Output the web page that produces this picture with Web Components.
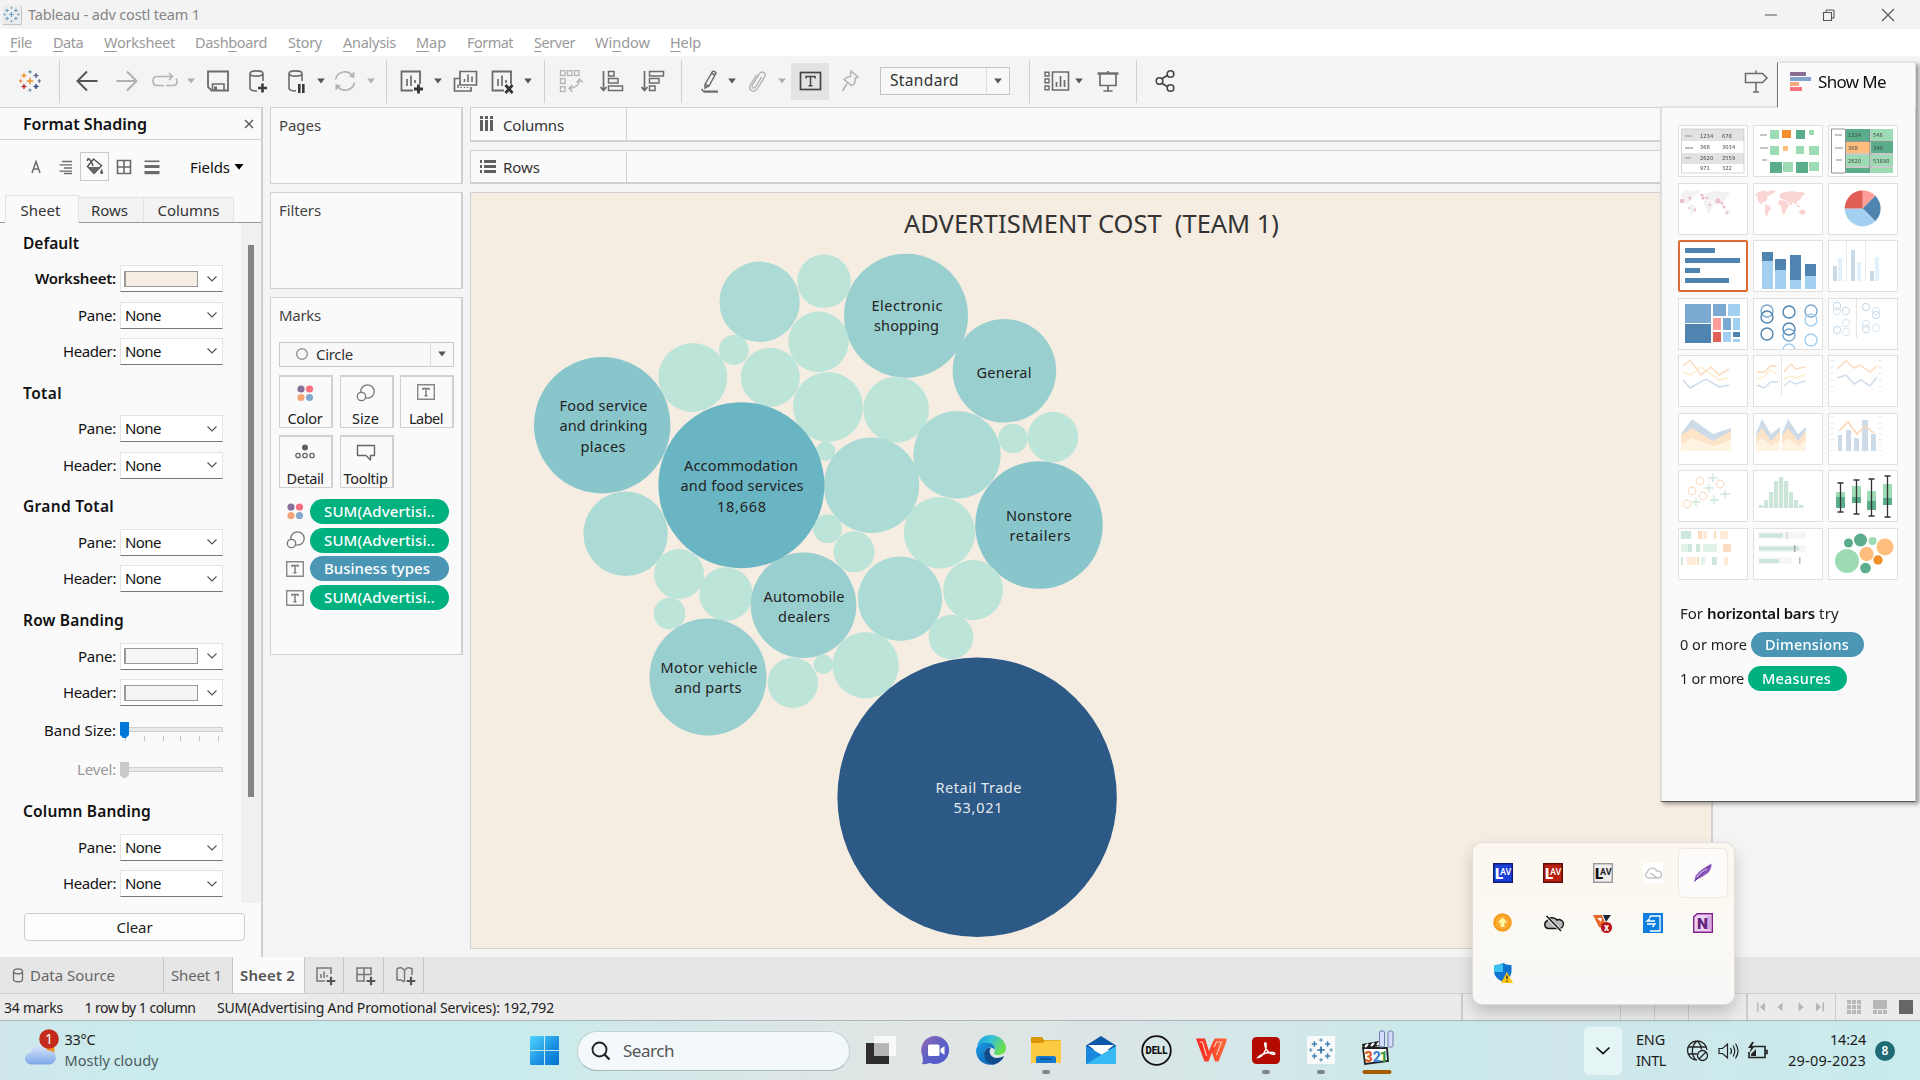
<!DOCTYPE html>
<html lang="en">
<head>
<meta charset="utf-8">
<title>Tableau - adv costl team 1</title>
<style>
html,body{margin:0;padding:0;width:1920px;height:1080px;overflow:hidden;background:#f4f4f4}
</style>
</head>
<body>
<tableau-desktop></tableau-desktop>
<script>
const BOOK = '"Noto Sans",sans-serif';
const SEGOE = '"Noto Sans","Open Sans",sans-serif';
const plus = (x, y, r, c, w) => `<path d="M${x - r} ${y}H${x + r}M${x} ${y - r}V${y + r}" stroke="${c}" stroke-width="${w}" fill="none"/>`;
const rects = (c, list) => list.map(r => `<rect x="${r[0]}" y="${r[1]}" width="${r[2]}" height="${r[3]}" fill="${r[4] || c}"/>`).join('');
const circs = (list, attrs = '') => list.map(r => `<circle cx="${r[0]}" cy="${r[1]}" r="${r[2]}" ${attrs || `fill="${r[3]}"`}/>`).join('');
const line = (d, c, w = 1.5, extra = '') => `<path d="${d}" fill="none" stroke="${c}" stroke-width="${w}" ${extra}/>`;
const burst = (k, cols) => plus(k, k, k * .3, cols[0], k * .14) +
  plus(k * .45, k * .5, k * .22, cols[1], k * .12) + plus(k * 1.55, k * .5, k * .22, cols[2], k * .12) +
  plus(k * .45, k * 1.5, k * .22, cols[3], k * .12) + plus(k * 1.55, k * 1.5, k * .22, cols[4], k * .12) +
  plus(k, k * .17, k * .15, cols[5], k * .1) + plus(k, k * 1.83, k * .15, cols[6], k * .1) +
  plus(k * .15, k, k * .15, cols[7], k * .1) + plus(k * 1.85, k, k * .15, cols[8], k * .1);
const blues = ['#2e6f9e', '#4284ad', '#4284ad', '#4284ad', '#4284ad', '#5f97ba', '#5f97ba', '#5f97ba', '#5f97ba'];
const pale = blues.map(() => '#5f9fc4');
const G = '#6b6b6b', L = '#b3b3b3';
const db = c => line('M7 6.5C7 3 20 3 20 6.5C20 10 7 10 7 6.5V21C7 23.5 12 24 14 24M20 6.5V14', c, 1.6);
const sheet = line('M16 23.5H4.5V4.5H23V17', G, 1.8) + line('M10 12V19M14 8.5V19M18 13V16', G, 1.7);

const ICONS = {
  applogo: [20, 20, `<rect x=".5" y=".5" width="19" height="19" fill="#ececec"/><path d="M19.5 1V19.5H1" fill="none" stroke="#c4c4c4"/><g transform="translate(1.5 1.5)">${burst(8, pale)}</g>`],
  logo: [22, 22, burst(11, ['#eb912c', '#eb912c', '#5c6692', '#c72035', '#1f447e', '#59879b', '#7199a6', '#e8762d', '#5c6692'])],
  back: [28, 28, line('M24.5 14H5M14 4.5L4.5 14L14 23.5', '#555', 2)],
  fwd: [28, 28, line('M3.500 14H23M14 4.500L23.500 14L14 23.500', '#b0b0b0', 2)],
  redo: [28, 28, line('M13 18.500H6Q2 18.500 2 14Q2 9.500 6 9.500H21M15 18.500H22Q26 18.500 26 14.500Q26 12.500 25 11.500M18 6L21.500 9.500L18 13', L, 1.6)],
  save: [28, 28, line('M4 4.500H24V23.500H7.500L4 20Z', G, 1.8) + line('M8.500 23V17H20V23', G, 1.6) + rects(G, [[10, 19.500, 3, 4]])],
  dbplus: [28, 28, db(G) + plus(19.500, 21, 4.500, '#3b3b3b', 2.600)],
  dbpause: [28, 28, db(G) + rects('#3b3b3b', [[16, 17, 2.600, 9], [20, 17, 2.600, 9]])],
  refresh: [28, 28, line('M4.500 12.500A9.500 9.500 0 0 1 22 9.500M23.500 15.500A9.500 9.500 0 0 1 6 18.500', L, 1.7) + '<path d="M23.500 4.500V11L18 9.500ZM4.500 23.500V17L10 18.500Z" fill="#b3b3b3"/>'],
  sheetplus: [28, 28, sheet + plus(21.500, 22, 4.500, '#333', 2.800)],
  sheetx: [28, 28, sheet + line('M17.500 18L24.500 26M24.500 18L17.500 26', '#333', 2.900)],
  dup: [28, 28, line('M9 4.500H25.500V18H9ZM8 11.500H3.500V24H20V20', G, 1.7) + line('M13.500 12V15M17 7.500V15M21 9.500V15', G, 1.600) + line('M7 21V17.500M10 21V20M13.500 21V20M16.500 21V20', G, 1.500)],
  swap: [28, 28, [[4, 4], [11, 4], [18, 4], [4, 12], [4, 20]].map(p => `<rect x="${p[0] - .5}" y="${p[1] - .3}" width="4.500" height="4.800" fill="none" stroke="#b3b3b3" stroke-width="1.300"/>`).join('') + line('M22.500 13Q22 20 13 21.500M15.500 18L12 21.500L15.500 25M19.500 15.500L22.700 12L25.500 15.500', L, 1.400)],
  asc: [28, 28, line('M5.500 4V23M2.500 20L5.500 23.500L8.500 20', G, 1.700) + line('M10.500 4.500H16V9H10.500ZM10.500 11.500H20V16H10.500ZM10.500 19H24.500V23.500H10.500Z', G, 1.500)],
  desc: [28, 28, line('M5.500 4V23M2.500 20L5.500 23.500L8.500 20', G, 1.700) + line('M10.500 4.500H24.500V9H10.500ZM10.500 11.500H20V16H10.500ZM10.500 19H16V23.500H10.500Z', G, 1.500)],
  pen: [28, 28, line('M8 17.500L15.500 4.500Q17.500 3.500 19 6L12 19L8 21ZM8 17.500L12 19M15 6.500L18 8', G, 1.500) + rects(G, [[7, 23.500, 14, 2.200]]) + line('M4.500 22L7 25', G, 1.500)],
  clip: [28, 28, line('M17.500 10L11.500 20Q10 22 8.500 20.500Q7.500 19.500 8.500 17.500L15.500 6.500Q17.500 4 20 5.500Q22 7 20.500 10L13.500 21.500Q11 25.500 7.500 23.500Q4.500 21.500 6.500 17.500L12.500 8', L, 1.400)],
  tbox: [38, 37, `<rect width="38" height="37" fill="#e3e3e3"/><rect x="9.500" y="9.500" width="20" height="17" fill="none" stroke="#444" stroke-width="1.700"/>` + line('M15 15.500V13.500H24V15.500M19.500 13.500V22.500M17.500 22.800H21.500', '#444', 1.500)],
  pin: [28, 28, line('M15 4L22 10L19.500 11L18.500 16.500L15.500 18.500L8 12.500L11 10.500L14.500 9.500ZM11 16.500L6.500 24', L, 1.500)],
  fit: [28, 28, line('M9.500 5H25.500V23H9.500Z', G, 1.600) + line('M13.500 15V20M17.500 9V20M21.500 13V20', G, 1.700) + line('M2 5.200H6V9H2ZM2 12H6V15.800H2ZM2 19H6V22.800H2Z', G, 1.400)],
  present: [28, 28, line('M3.500 6.500H24.500', G, 2.400) + line('M6 7V18.500H22V7M14 4V6M14 19V24M9.500 24H18.500', G, 1.700)],
  share: [28, 28, line('M9.500 12L16 8M9.500 16L16 20', '#444', 1.600) + circs([[7.500, 14, 3.300], [18.500, 7, 3.300], [18.500, 21, 3.300]], 'fill="none" stroke="#444" stroke-width="1.600"')],
  sign: [28, 28, line('M3.500 6.500H20.500L25 11L20.500 15.500H3.500Z', G, 1.500) + line('M14 3.500V6.500M14 15.500V25M11 25H17', G, 1.500)],
  tri: [10, 6, `<path d="M1.200 .5H8.800L5 5.500Z" fill="#555"/>`],
  trilight: [10, 6, `<path d="M1.200 .5H8.800L5 5.500Z" fill="#b0b0b0"/>`],
  triblack: [10, 6, `<path d="M.5 0H9.500L5 5.800Z" fill="#000"/>`],
  x: [10, 10, line('M1 1L9 9M9 1L1 9', '#555', 1.400)],
  chev: [12, 8, line('M1.500 1.500L6 6L10.500 1.500', '#555', 1.200)],
  fA: [20, 20, line('M6 16L10 4.500L14 16M7.500 12H12.500', G, 1.500)],
  fAlign: [20, 20, line('M6 4.500H16M3.500 7.800H16M8 11H16M3.500 14.200H16M8 16.500H16', G, 1.300)],
  fBucket: [30, 30, `<rect x=".5" y=".5" width="28" height="28" fill="#fafafa" stroke="#c9c9c9"/>` + line('M13.500 7L21.500 13.500L14 21.500L7.500 14.500ZM13 14C10 5 7 6 7.500 9', '#555', 1.500) + '<path d="M8 15H21L14 22Z" fill="#666"/><path d="M21.500 17C23.500 20 23.500 22 21.500 22C19.800 22 19.800 20 21.500 17Z" fill="#555"/>'],
  fGrid: [20, 20, line('M3.500 3.500H16.500V16.500H3.500ZM10 3.500V16.500M3.500 10H16.500', G, 1.600)],
  fLines: [20, 20, rects(G, [[2.500, 3.500, 15, 1.600], [2.500, 8, 15, 3], [2.500, 14, 15, 3.200]])],
  cols: [14, 16, rects('#5f5f5f', [[0, 0, 3, 3], [5, 0, 3, 3], [10, 0, 3, 3], [0, 4, 3, 11], [5, 4, 3, 11], [10, 4, 3, 11]])],
  rows: [16, 14, rects('#5f5f5f', [[0, 0, 2, 3], [0, 5, 2, 3], [0, 10, 2, 3], [4, 0, 12, 3], [4, 5, 12, 3], [4, 10, 12, 3]])],
  ring: [14, 14, circs([[7, 7, 5.300]], 'fill="none" stroke="#999" stroke-width="1.500"')],
  color: [18, 18, circs([[5, 5, 3.600, '#87709a'], [13.500, 5, 3.600, '#fa7080'], [5, 13.500, 3.600, '#f5a678'], [13.500, 13.500, 3.600, '#84a9cf']])],
  size: [20, 18, circs([[11.500, 7.500, 6.700]], 'fill="none" stroke="#777" stroke-width="1.300"') + circs([[5.500, 12.500, 4.200]], 'fill="#fafafa" stroke="#777" stroke-width="1.300"')],
  label: [18, 16, line('M.7 .7H17.300V15.300H.7Z', '#888', 1.400) + line('M6 6V4.500H12V6M9 4.500V11.500M7.500 11.700H10.500', '#777', 1.400)],
  detail: [20, 16, circs([[10, 3.500, 3, '#5f5f5f']]) + circs([[3, 11.500, 2.200], [10, 11.500, 2.200], [17, 11.500, 2.200]], 'fill="none" stroke="#666" stroke-width="1.300"')],
  tooltip: [20, 18, line('M1.500 1.500H18.500V11.500H14.500V16L10 11.500H1.500Z', '#666', 1.400, 'stroke-linejoin="round"')],
  showme: [22, 20, rects('', [[0, 0, 16, 4, '#8a6d92'], [0, 5, 21, 4, '#84a5cb'], [0, 10, 9, 4, '#f5a97f'], [0, 15, 12, 4, '#fb7381']])],
  cyl: [12, 15, line('M1.500 3.500C1.500 0 10.500 0 10.500 3.500V11.500C10.500 14.500 1.500 14.500 1.500 11.500ZM1.500 3.500C1.500 6.500 10.500 6.500 10.500 3.500', G, 1.300)],
  nsheet: [22, 20, line('M10 15H2V2H16V8', '#777', 1.500) + line('M6 8V12M9 5.500V12M12 9V11', '#777', 1.500) + plus(16, 15, 4.300, '#555', 2.200)],
  ndash: [22, 20, line('M10 15H2V2H16V9M9 2V15M2 8.500H16', '#777', 1.500) + plus(16, 15, 4.300, '#555', 2.200)],
  nstory: [22, 20, line('M2 2.500L6 1.500L9.500 4L13 1.500L17 2.500V9M9.500 4V15M2 2.500V14H6L9.500 16', '#777', 1.500) + plus(16, 15, 4.300, '#555', 2.200)],
  nfirst: [10, 10, '<path d="M1 .5H2.500V9.500H1ZM9 .5V9.500L4 5Z" fill="#b5b5b5"/>'],
  nprev: [10, 10, '<path d="M7.500 .5V9.500L2.500 5Z" fill="#b5b5b5"/>'],
  nnext: [10, 10, '<path d="M2.500 .5V9.500L7.500 5Z" fill="#b5b5b5"/>'],
  nlast: [10, 10, '<path d="M7.500 .5H9V9.500H7.500ZM1 .5V9.500L6 5Z" fill="#b5b5b5"/>'],
  vgrid: [14, 14, rects('#b8b8b8', [[0, 0, 4, 4], [5, 0, 4, 4], [10, 0, 4, 4], [0, 5, 4, 4], [5, 5, 4, 4], [10, 5, 4, 4], [0, 10, 4, 4], [5, 10, 4, 4], [10, 10, 4, 4]])],
  vfilm: [14, 14, rects('#b8b8b8', [[0, 0, 14, 9], [0, 10, 4, 4], [5, 10, 4, 4], [10, 10, 4, 4]])],
  vtab: [14, 14, rects('#666', [[0, 0, 14, 14]])],
  min: [12, 12, line('M0 6H12', '#555', 1)],
  restore: [14, 14, line('M1.500 4.500H9.500V12.500H1.500ZM4 4V3Q4 2 5 2H11Q12 2 12 3V9Q12 10 11 10H10', '#555', 1.100)],
  winclose: [14, 14, line('M1 1L13 13M13 1L1 13', '#555', 1.100)],
  // taskbar
  weather: [46, 44, `<defs><linearGradient id="c" x1="0" y1="0" x2="0" y2="1"><stop offset="0" stop-color="#dbe8fb"/><stop offset="1" stop-color="#7ea7ea"/></linearGradient></defs><circle cx="28" cy="21" r="6.500" fill="#f7931e"/><path d="M11 35.500a6 6 0 0 1 0-12 8.500 8.500 0 0 1 16.500-2 7 7 0 0 1 2.500 14Z" fill="url(#c)"/><circle cx="29" cy="10" r="9.800" fill="#c42b1c"/><text x="29" y="15" font-family="Noto Sans" font-size="14" fill="#fff" text-anchor="middle">1</text>`],
  win: [29, 29, `<defs><linearGradient id="w" x1="0" y1="0" x2="1" y2="1"><stop offset="0" stop-color="#4fd4ff"/><stop offset=".6" stop-color="#1a8fe0"/><stop offset="1" stop-color="#0072d0"/></linearGradient></defs><path d="M1 0H14V14H0V1Q0 0 1 0M15 0H28Q29 0 29 1V14H15M0 15H14V29H1Q0 29 0 28M15 15H29V28Q29 29 28 29H15Z" fill="url(#w)"/>`],
  search: [20, 20, circs([[8.500, 8.500, 7]], 'fill="none" stroke="#222" stroke-width="1.900"') + line('M13.500 13.500L18.500 18.500', '#222', 2.300)],
  taskview: [30, 29, `<path d="M0 7H23V28H0Z" fill="#2f2e2c"/><path d="M8 0H30V20H8Z" fill="#fff" opacity=".75"/><path d="M8 7.500H23V20H8Z" fill="#b5b5b5"/>`],
  teams: [30, 29, `<defs><linearGradient id="t" x1="0" y1="0" x2="1" y2="1"><stop offset="0" stop-color="#9a67b2"/><stop offset=".5" stop-color="#5b5fc7"/><stop offset="1" stop-color="#5059c9"/></linearGradient></defs><path d="M15 0A14 14 0 1 1 9 27Q5 28.500 1 28Q2.500 25 1.500 20A14 14 0 0 1 15 0Z" fill="url(#t)"/><rect x="7" y="8.500" width="11.500" height="11.500" rx="1.500" fill="#fff"/><path d="M19.500 13L23.500 10V19L19.500 16Z" fill="#fff"/>`],
  edge: [30, 30, `<defs><linearGradient id="e" x1="0" y1="0" x2="1" y2=".4"><stop offset="0" stop-color="#1b9de2"/><stop offset=".5" stop-color="#35c1d6"/><stop offset="1" stop-color="#6be04e"/></linearGradient><linearGradient id="f" x1="0" y1="0" x2="1" y2="1"><stop offset="0" stop-color="#1a9ee8"/><stop offset="1" stop-color="#0b56a8"/></linearGradient></defs><path d="M1 11C3 3 9 0 15 0C24 0 30 7 30 13C30 18 26 20 22 20C18 20 17 18 19 16C20 12 17 9 13 9C8 8 3 9 1 11Z" fill="url(#e)"/><path d="M0 15C1 9 7 6 13 8C18 9 20 13 18 15C17 11 9 12 8 18C8 24 14 29 20 29C8 32 0 25 0 15Z" fill="url(#f)"/><path d="M8 18C9 13 13 12 15 13C12 16 14 22 20 23C23 23 26 22 28 21C27 25 22 29 17 29.500C11 28 8 24 8 18Z" fill="#114a8b"/>`],
  explorer: [30, 28, `<path d="M1 1Q0 1 0 2V8H30V6Q30 4 28 4H13L11 1Z" fill="#d9960b"/><path d="M0 7H12L14 4.500H28Q30 4.500 30 6V27H0Z" fill="#fccb41"/><path d="M5 27V22Q5 20 7 20H23Q25 20 25 22V27Z" fill="#1479cd"/><path d="M9 23H21" stroke="#0a529a" stroke-width="1.500"/>`],
  mail: [30, 29, `<path d="M0 9.500L15 0L30 9.500V14H0Z" fill="#0d57a8"/><path d="M2 9H28L15 19Z" fill="#fff"/><path d="M0 10L17 19.500L30 28H0Z" fill="#1f97e6"/><path d="M30 10L0 28H30Z" fill="#38b9f3"/><path d="M0 10L15 19L0 28Z" fill="#1b87dc"/>`],
  dell: [31, 31, `<circle cx="15.500" cy="15.500" r="14.300" fill="none" stroke="#111" stroke-width="1.800"/><text x="15.500" y="19.300" font-family="Roboto" font-weight="900" font-size="10" text-anchor="middle" textLength="22" lengthAdjust="spacingAndGlyphs" fill="#111">DELL</text>`],
  wps: [31, 24, `<defs><linearGradient id="p" x1="0" y1="0" x2="1" y2="0"><stop offset="0" stop-color="#f8241d"/><stop offset="1" stop-color="#fb6a3a"/></linearGradient></defs><path d="M0 .5H9L13 13L16.500 4.500L19 .5H30.500V3.500L22.500 23.500H19L16 14.500L12.500 23.500H8.500Z" fill="url(#p)"/><path d="M3.500 4H6.500L10.500 18M20.500 17L25.500 4H20.500L18 9" fill="none" stroke="#ffd0c4" stroke-width="1.100"/>`],
  acrobat: [28, 27, `<rect width="28" height="27" rx="4.500" fill="#b30b00"/>` + line('M6 20.500C10 20 15 14 14 7C14 5 12.500 5.500 12.700 7.500C13 12 17 17 22 17.500C24 17 22 15 19 15.300C14 15.500 8 18 6 20.500Z', '#fff', 1.500)],
  tabtask: [28, 28, `<rect width="28" height="28" fill="#f7f9fa"/><g transform="translate(2 2)">${burst(12, blues)}</g>`],
  mpc: [36, 36, `<path d="M3 12L26 8V13L4 17Z" fill="#222"/><path d="M4 16H28L29 29L6 32Z" fill="#fff" stroke="#222" stroke-width="1.800"/><path d="M6 15L9 12M12 14L15 11M18 13L21 10" stroke="#fff" stroke-width="2.200"/><text x="5.500" y="29.500" font-family="Roboto" font-weight="900" font-size="14"><tspan fill="#e0591c">3</tspan><tspan fill="#3a82d2">2</tspan><tspan fill="#3c9a2f" dx="-1">1</tspan></text><rect x="20.500" y="-1" width="5" height="16" rx="1.500" fill="#d4dcff" stroke="#707ba8"/><rect x="29" y="-1" width="5" height="16" rx="1.500" fill="#d4dcff" stroke="#707ba8"/>`],
  tchev: [16, 10, line('M1.500 1.500L8 7.500L14.500 1.500', '#111', 1.700)],
  globe: [22, 22, line('M10 1A9.500 9.500 0 1 0 10 20M10 1A9.500 9.500 0 0 1 20 10M10 1C4 6 4 15 9 20M10 1C13 3.500 14.500 6.500 14.500 9.500M1.500 7H19M1.500 14H10', '#222', 1.300) + circs([[15.500, 15.500, 5]], 'fill="none" stroke="#222" stroke-width="1.300"') + line('M12 19L19 12', '#222', 1.300)],
  speaker: [22, 18, line('M1 6.500H4.500L9.500 2V16L4.500 11.500H1ZM12.500 6Q14.500 9 12.500 12M15 3.500Q18.500 9 15 14.500M17.500 1.500Q22.500 9 17.500 16.500', '#222', 1.200)],
  battery: [22, 18, line('M7 4.500H18V15.500H2V10M18.500 8.500H20V11.500H18.500', '#222', 1.600) + '<path d="M5 0L1 6H4L2.500 11L8 4H5L7 0ZM4 12L9 7V14H4Z" fill="#222"/>'],
  // tray
  lavb: [20, 20, `<rect x=".7" y=".7" width="18.600" height="18.600" fill="#1c3fd8" stroke="#0b1c74" stroke-width="1.400"/><text x="2" y="15.500" font-family="Roboto" font-weight="900" font-size="15" fill="#fff">L</text><text x="7" y="11.800" font-family="Roboto" font-size="9" font-weight="500" fill="#fff">AV</text>`],
  lavr: [20, 20, `<rect x=".7" y=".7" width="18.600" height="18.600" fill="#b81f0e" stroke="#5c0d06" stroke-width="1.400"/><text x="2" y="15.500" font-family="Roboto" font-weight="900" font-size="15" fill="#fff">L</text><text x="7" y="11.800" font-family="Roboto" font-size="9" font-weight="500" fill="#fff">AV</text>`],
  lavw: [20, 20, `<rect x=".7" y=".7" width="18.600" height="18.600" fill="#eee" stroke="#999" stroke-width="1.400"/><text x="2" y="15.500" font-family="Roboto" font-weight="900" font-size="15" fill="#111">L</text><text x="7" y="11.800" font-family="Roboto" font-size="9" font-weight="700" fill="#222">AV</text>`],
  cc: [20, 20, `<rect width="20" height="20" fill="#fff"/>` + line('M5 15A3.200 3.200 0 0 1 4.500 9A5 5 0 0 1 14 8.200A3.500 3.500 0 1 1 14.500 15ZM7 10.500Q9.500 10.500 11 12.500T14.500 15', '#c4c4c4', 1.400)],
  feather: [20, 20, `<path d="M1 19.500L2.500 13Q6 8 11 5L18.500 .5Q19 5.500 15 10Q9 14.500 3 17Z" fill="#8d58bd"/><path d="M2 18L16.500 3" stroke="#5f2d94" stroke-width="1"/><path d="M4 14Q9 8 14 6" stroke="#cdb4e6" stroke-width="1.200" fill="none"/>`],
  update: [20, 20, `<circle cx="9.500" cy="9.500" r="9.300" fill="#f99a1c"/><circle cx="9.500" cy="9.500" r="7" fill="#fba92f"/><path d="M9.500 4.500L14.500 9.500H11.500V14H7.500V9.500H4.500Z" fill="#fff6a0"/>`],
  cloudoff: [21, 20, `<path d="M5 15.500A4 4 0 0 1 4 8A6 6 0 0 1 14 7A4.500 4.500 0 1 1 15.500 15.500Z" fill="#b9b9b9" stroke="#111" stroke-width="1.400"/><path d="M3 3L18 18" stroke="#fff" stroke-width="3"/><path d="M3.500 3L18 18" stroke="#111" stroke-width="1.500"/>`],
  vlc: [20, 20, `<path d="M0 2H9L12 10L9 15L6 14Z" fill="#e8652a"/><path d="M10 2H18L13 9Z" fill="#1c2536"/><path d="M4 5H9L8 9Z" fill="#fff"/><circle cx="13.500" cy="14.500" r="5.600" fill="#b3151b"/><text x="13.500" y="18" font-family="Roboto" font-weight="700" font-size="10" fill="#fff" text-anchor="middle">x</text>`],
  phone: [20, 20, `<rect width="20" height="20" fill="#0b7ee0"/>` + line('M7 3H17V18H7M7 3V5M12 8H4L7 5.500M4 11H12L9.500 14', '#fff', 1.300)],
  onenote: [20, 20, `<path d="M4 .7H19.300V19.300H.7V4Z" fill="#ecd0f2" stroke="#80218c" stroke-width="1.400"/><rect x="14" y="3" width="4" height="14" fill="#d9a8e4"/><text x="9.500" y="15.500" font-family="Roboto" font-weight="900" font-size="15.500" fill="#63257c" text-anchor="middle">N</text>`],
  defender: [20, 20, `<path d="M10 0Q14 2.500 18.500 2V9Q18 15 10 19Q1.500 15 1 9V2Q6 2.500 10 0Z" fill="#1173d0"/><path d="M10 0V9H1V2Q6 2.500 10 0Z" fill="#3bc0f2"/><path d="M14 9L20 20H8Z" fill="#fdc513"/><path d="M14 12.500V16M14 17.500V18.700" stroke="#222" stroke-width="1.300"/>`],
};

const num = (x, y, t) => `<text x="${x}" y="${y}" font-family="DejaVu Sans" font-size="5.400" textLength="${t.length * 3.300}" lengthAdjust="spacingAndGlyphs" fill="#444">${t}</text>`;
const land = (c) => `<g fill="${c}"><path d="M2 12L5 9L12 7L14 9L17 8L20 10L17 12L14 14L14 17L11 19L8 21L5 18L4 13Z"/><path d="M12 21L17 23L18 26L15 30L14 34L12 30Z"/><path d="M16 8L23 7L21 10L18 12ZM26 13L28 10L33 9L38 8L44 9L50 9L52 11L49 13L47 17L44 18L43 22L40 19L38 23L35 18L32 17L28 16Z"/><path d="M26 17L34 18L36 22L33 27L31 32L29 29L28 23L25 21ZM46 28L50 26L53 29L51 32L47 31ZM44 21L48 24L44 24Z"/></g>`;
const THUMBS = [
  rects('#e2e2e2', [[4, 4, 62, 12], [4, 28, 62, 11]]) + line('M3.500 4H66V48H3.500Z', '#ccc', .8) + rects('#bbb', [[7, 10, 7, 2], [7, 22, 8, 2], [7, 32, 6, 2]]) + num(22, 12.500, '1234') + num(44, 12.500, '678') + num(22, 24, '368') + num(44, 24, '3034') + num(22, 35, '2620') + num(44, 35, '2559') + num(22, 45, '971') + num(44, 45, '322'),
  rects('#9ddbb5', [[7, 9, 7, 2, '#c4c4c4'], [7, 22, 8, 2, '#c4c4c4'], [9, 34, 5, 2, '#c4c4c4'], [17, 5, 9, 9], [29, 5, 9, 8, '#f28e2b'], [43, 5, 9, 9, '#59ad8a'], [56, 5, 5, 5], [17, 21, 9, 9], [30, 21, 5, 5, '#ffbe7d'], [43, 21, 8, 8], [56, 21, 10, 9], [17, 37, 12, 11, '#59ad8a'], [30, 37, 10, 10], [43, 37, 12, 11, '#59ad8a'], [56, 37, 10, 9]]),
  rects('#59ad8a', [[18, 4, 24, 12], [43, 4, 22, 12, '#9ddbb5'], [18, 17, 24, 11, '#ffbe7d'], [43, 17, 22, 11], [18, 30, 24, 11, '#9ddbb5'], [43, 30, 22, 11, '#9ddbb5'], [18, 43, 24, 5], [43, 43, 22, 5, '#9ddbb5'], [7, 9, 7, 2, '#c4c4c4'], [7, 22, 8, 2, '#c4c4c4'], [8, 34, 6, 2, '#c4c4c4']]) + line('M3.500 4H17M3.500 4V48H17M17.500 4V48M42 4V48M17.500 16.500H65M17.500 29H65M17.500 42H65', '#777', .8) + num(20, 12, '1234') + num(45, 12, '546') + num(20, 25, '368') + num(45, 25, '340') + num(20, 37.500, '2620') + num(45, 37.500, '53890'),
  land('#f2f2f2') + circs([[4, 18, 2.300], [12, 15, 1.500], [24, 12, 1.600], [25, 15, 1.700], [40, 18, 2.500], [44, 20, 1.500], [46, 24, 1.500], [17, 27, 1.400], [49, 30, 1.300], [11, 25, 1.100], [29, 15, 1.500], [32, 22, 1.200]].map(a => [...a, '#eac0c6'])),
  land('#fbd5d3'),
  `<g transform="translate(34.700 25.500)"><path d="M0 0V-18A18 18 0 0 1 12.700-12.700Z" fill="#ff9d9a"/><path d="M0 0L12.700-12.700A18 18 0 0 1 12.700 12.700Z" fill="#4e84af"/><path d="M0 0L12.700 12.700A18 18 0 0 1-18 0Z" fill="#a3d0f0"/><path d="M0 0H-18A18 18 0 0 1 0-18Z" fill="#e15f57"/></g>`,
  rects('#4e84af', [[7, 8, 30, 5], [7, 18, 55, 5], [7, 28, 15, 5], [7, 38, 44, 5]]),
  rects('#a3d0f0', [[9, 12, 11, 9, '#4e84af'], [9, 21, 11, 28], [22, 19, 11, 11, '#4e84af'], [22, 30, 11, 19], [37, 15, 11, 25, '#4e84af'], [37, 40, 11, 9], [52, 24, 11, 12, '#4e84af'], [52, 36, 11, 13]]),
  rects('#c9d9e6', [[5, 26, 4, 15], [10, 18, 4, 23, '#e3f1fa'], [23, 10, 4, 31], [29, 22, 4, 19, '#e3f1fa'], [42, 31, 4, 10], [47, 17, 4, 24, '#e3f1fa']]) + line('M18.500 0V41M37.500 0V41', '#eaeaea', 1),
  rects('#7ba9d0', [[7, 6, 26, 19], [7, 26, 26, 19, '#4e84af'], [35, 6, 13, 12], [50, 6, 12, 12, '#a3d0f0'], [35, 20, 8, 12, '#ff9d9a'], [45, 20, 8, 12], [55, 20, 7, 12, '#a3d0f0'], [35, 34, 8, 10, '#e15f57'], [45, 34, 8, 10, '#a3d0f0'], [55, 34, 7, 5, '#4e84af'], [55, 41, 7, 3, '#a3d0f0']]),
  [['#7ba9d0', 14, 13], ['#4e84af', 14, 19], ['#4e84af', 14, 36], ['#4e84af', 36, 14], ['#4e84af', 36, 31], ['#7ba9d0', 36, 37], ['#a3d0f0', 36, 52], ['#7ba9d0', 58, 13], ['#a3d0f0', 58, 22], ['#a3d0f0', 58, 42]].map(a => `<circle cx="${a[1]}" cy="${a[2]}" r="6" fill="none" stroke="${a[0]}" stroke-width="1.400"/>`).join(''),
  [[9, 8], [9, 13], [18, 13], [18, 25], [9, 32], [18, 34], [38, 9], [48, 13], [48, 17], [38, 26], [38, 31], [48, 30]].map((a, i) => `<circle cx="${a[0]}" cy="${a[1]}" r="3.600" fill="none" stroke="${i % 2 ? '#dbe9f4' : '#cbdcea'}" stroke-width="1.100"/>`).join('') + line('M28.500 0V40', '#e6e6e6', 1),
  line('M5 11L12 5L23 20L33 12L41 20L51 14', '#fbdcc0', 1.500) + line('M5 17L13 20L23 12L41 25L51 23', '#fdedc9', 1.500) + line('M5 25L12 33L28 24L41 32L51 30', '#cfdcea', 1.500),
  line('M4 17H12L17 11H24M31 17L38 9L43 14L52 12', '#fbdcc0', 1.400) + line('M4 24L11 22L17 15L24 19M31 24L37 21L44 23L52 19', '#fdedc9', 1.400) + line('M4 30L11 33L18 27H25M31 31L37 26L42 29L52 26', '#cfdcea', 1.400) + line('M28.500 0V41', '#e6e6e6', 1),
  line('M9 14L18 6L26 13L32 10L42 17L49 11', '#fbdcc0', 1.500) + line('M9 23L18 20L26 29L33 25L42 31L49 22', '#cfdcea', 1.500) + line('M4 5V38M52 5V38', '#e4e4e4', 3, 'stroke-dasharray="1 5.500"'),
  `<path d="M3 21L14 6L35 21L53 15V38H3Z" fill="#cddbe8"/><path d="M3 22L14 15L35 28L53 18V38H3Z" fill="#fde3c8"/><path d="M3 31L14 25L35 33L53 27V38H3Z" fill="#fff3e2"/>`,
  `<path d="M3 21L9 6L18 21L27 14V38H3ZM29 21L35 6L45 21L53 14V38H29Z" fill="#cddbe8"/><path d="M3 23L9 15L18 28L27 18V38H3ZM29 23L35 15L45 28L53 18V38H29Z" fill="#fde3c8"/><path d="M3 31L9 25L18 33L27 27V38H3ZM29 31L35 25L45 33L53 27V38H29Z" fill="#fff3e2"/>`,
  rects('#cddbe8', [[10, 22, 4, 16], [18, 17, 5, 21], [26, 25, 5, 13], [34, 7, 6, 31], [43, 21, 5, 17]]) + line('M11 18L20 9L29 21L37 13L46 20', '#fbd6b6', 1.500) + line('M4 4V38M52 4V38', '#e4e4e4', 3, 'stroke-dasharray="1 4.500"'),
  [[22, 11], [42, 14], [14, 21], [25, 26], [9, 34]].map(a => `<circle cx="${a[0]}" cy="${a[1]}" r="3.800" fill="none" stroke="#fbdcc4" stroke-width="1.200"/>`).join('') + [[35, 8], [31, 18], [47, 24], [36, 30], [18, 32]].map(a => plus(a[0], a[1], 4.500, '#cde8da', 1.300)).join(''),
  rects('#cbe5d8', [3, 8, 16, 27, 31, 27, 16, 8, 3].map((h, i) => [6 + i * 5, 38 - h, 4.200, h])),
  rects('#9ddbb5', [[8, 22, 9, 5], [8, 27, 9, 11, '#59ad8a'], [24, 16, 9, 11], [24, 27, 9, 6, '#59ad8a'], [39, 21, 9, 10], [39, 31, 9, 9, '#59ad8a'], [55, 14, 9, 14], [55, 28, 9, 7, '#59ad8a']]) + line('M12.500 13V42M9.500 13H15.500M9.500 42H15.500M28.500 10V44M25.500 10H31.500M25.500 44H31.500M43.500 9V46M40.500 9H46.500M40.500 46H46.500M59.500 6V47M56.500 6H62.500M56.500 47H62.500', '#333', 1.300),
  rects('#cde8da', [[3, 3, 10, 8], [20, 3, 4, 8, '#fbdcc0'], [25, 3, 4, 8, '#feebd8'], [36, 3, 2, 8, '#fbdcc0'], [42, 3, 8, 8, '#feebd8'], [3, 16, 7, 8, '#e2f3e9'], [10, 16, 4, 8], [18, 16, 4, 8], [25, 16, 14, 8, '#e2f3e9'], [45, 16, 8, 8, '#fbdcc0'], [3, 29, 2, 8], [9, 29, 9, 8, '#feebd8'], [19, 29, 2, 8, '#fbdcc0'], [23, 29, 4, 8, '#e2f3e9'], [34, 29, 5, 8], [46, 29, 4, 8, '#feebd8']]),
  rects('#f6f6f6', [[6, 4, 47, 7], [6, 17, 47, 7], [6, 29, 33, 7], [6, 5.500, 24, 4, '#cbe5d8'], [6, 18.500, 40, 4, '#cbe5d8'], [6, 31, 20, 4, '#cbe5d8'], [33, 4, 2, 7, '#ddd'], [41, 17, 1.500, 7, '#aaa'], [46, 29, 1.500, 7, '#bbb']]),
  circs([[19, 33, 12, '#9ddbb5'], [20.500, 15, 4.500, '#59ad8a'], [32.500, 12, 6.500, '#59ad8a'], [44.500, 13, 4, '#9ddbb5'], [57, 19, 8.500, '#ffbe7d'], [38.500, 26, 7.200, '#ffbe7d'], [50, 32, 4.700, '#f28e2b'], [37.500, 40, 5.300, '#59ad8a']]),
];

class Base extends HTMLElement {
  constructor() { super(); this.attachShadow({ mode: 'open' }); }
  connectedCallback() {
    if (this.ready) return;
    this.ready = true;
    this.shadowRoot.innerHTML = `<style>*{box-sizing:border-box}${this.css()}</style>${this.html()}`;
    this.after?.();
  }
  attr(n, d = '') { return this.getAttribute(n) ?? d; }
}

/* Single-line label whose tracking is adjusted so that it fills the width given in "w". */
customElements.define('ui-text', class extends Base {
  css() {
    return `:host{display:block;flex:none;white-space:pre;line-height:1.25;font-family:${this.attr('f') === 'segoe' ? SEGOE : BOOK};font-size:${this.attr('s', 15)}px;font-weight:${this.attr('b', 400)};color:${this.attr('c', '#333')}}span{display:inline-block}`;
  }
  html() { return '<span><slot></slot></span>'; }
  after() {
    const w = +this.attr('w', 0), s = this.shadowRoot.querySelector('span');
    if (!w) return;
    const nat = s.getBoundingClientRect().width, n = this.textContent.length;
    s.style.letterSpacing = ((w - nat) / n).toFixed(3) + 'px';
    this.style.width = w + 'px';
  }
});

customElements.define('ui-icon', class extends Base {
  css() { return ':host{display:block;flex:none}svg{display:block;overflow:visible}'; }
  html() { const [w, h, c] = ICONS[this.attr('n')]; return `<svg width="${w}" height="${h}" viewBox="0 0 ${w} ${h}">${c}</svg>`; }
});

/* Row of items placed along one axis; every item names the x of its left edge. */
const track = items => {
  let end = 0;
  return items.map(([x, w, inner, style = '']) => {
    const m = x - end; end = x + w;
    return `<div style="flex:none;margin-left:${m.toFixed(1)}px;width:${w}px;${style}">${inner}</div>`;
  }).join('');
};
const ic = (c, n) => { const w = ICONS[n][0]; return [c - w / 2, w, `<ui-icon n="${n}"></ui-icon>`]; };
const tx = (x, w, t, o = '') => [x, w, `<ui-text w="${w}" ${o}>${t}</ui-text>`];

customElements.define('title-bar', class extends Base {
  css() { return ':host{display:flex;align-items:center;height:29px;background:#f3f3f3}'; }
  html() {
    return track([ic(12, 'applogo'), tx(28, 172, 'Tableau - adv costl team 1', 'f="segoe" s="14.500" c="#858585"'), ic(1771, 'min'), ic(1829, 'restore'), ic(1888, 'winclose')]);
  }
});

customElements.define('menu-bar', class extends Base {
  css() { return ':host{display:flex;align-items:center;height:27px;background:#fff}u{text-underline-offset:3px;text-decoration-thickness:1px}'; }
  html() {
    return track([[10, 22, '<u>F</u>ile'], [53, 30, '<u>D</u>ata'], [104, 71, '<u>W</u>orksheet'], [195, 72, 'Dash<u>b</u>oard'], [288, 34, 'S<u>t</u>ory'], [343, 53, '<u>A</u>nalysis'], [416, 30, '<u>M</u>ap'], [467, 46, 'F<u>o</u>rmat'], [534, 41, '<u>S</u>erver'], [595, 55, 'Wi<u>n</u>dow'], [670, 31, '<u>H</u>elp']]
      .map(a => tx(a[0], a[1], a[2], 'f="segoe" s="14.500" c="#999"')));
  }
});

customElements.define('tool-bar', class extends Base {
  css() {
    return `:host{display:flex;align-items:center;height:51px;padding-bottom:1px;background:#f4f4f4;box-sizing:border-box}.s{height:43px;background:#cfcfcf}.c{display:flex;align-items:center;height:28px;border:1px solid #c4c4c4;background:#f8f8f8;padding-left:9px}.d{display:grid;place-items:center;margin-left:27px;width:24px;height:26px;border-left:1px solid #ddd}`;
  }
  html() {
    const sep = x => [x, 1, '<div class="s"></div>'];
    return track([ic(30, 'logo'), sep(59), ic(87, 'back'), ic(127, 'fwd'), ic(165, 'redo'), ic(191, 'trilight'), ic(217.5, 'save'), ic(257, 'dbplus'), ic(296, 'dbpause'), ic(321, 'tri'), ic(345, 'refresh'), ic(371, 'trilight'), sep(386),
      ic(411, 'sheetplus'), ic(438, 'tri'), ic(465, 'dup'), ic(502, 'sheetx'), ic(528, 'tri'), sep(544), ic(571, 'swap'), ic(612, 'asc'), ic(653, 'desc'), sep(681), ic(711, 'pen'), ic(732, 'tri'), ic(758, 'clip'), ic(782, 'trilight'), ic(810, 'tbox'), ic(850, 'pin'),
      [880, 130, '<div class="c"><ui-text s="15.500" w="69">Standard</ui-text><div class="d"><ui-icon n="tri"></ui-icon></div></div>'], sep(1029), ic(1057, 'fit'), ic(1079, 'tri'), ic(1108, 'present'), sep(1136), ic(1166, 'share'), ic(1756, 'sign')]);
  }
});

customElements.define('ui-select', class extends Base {
  css() {
    return `:host{display:flex;align-items:center;box-sizing:border-box;width:103px;height:27px;background:#fff;border:1px solid #e3e3e3;border-bottom:1px solid #777;padding:0 4px 0 4px}div{flex:1}i{display:block;width:74px;height:16px;margin-left:-1px;border:1px solid #999;border-left-width:2px;background:${this.attr('fill', '#f5f5f5')}}`;
  }
  html() { return `<div>${this.hasAttribute('fill') ? '<i></i>' : '<ui-text w="36" c="#111">None</ui-text>'}</div><ui-icon n="chev"></ui-icon>`; }
});

customElements.define('ui-slider', class extends Base {
  css() { return ':host{display:block;width:103px;height:24px}svg{display:block}'; }
  html() {
    const off = this.hasAttribute('off');
    return `<svg width="103" height="24"><rect x=".5" y="9.500" width="102" height="4" fill="#e7eaea" stroke="#d0d0d0"/>${off ? '' : line('M5.500 18V23M24.500 18V23M43.500 18V23M60.500 18V23M79.500 18V23M98.500 18V23', '#c4c4c4', 1)}<path d="M0 4H9V17L6 20H3L0 17Z" fill="${off ? '#cacaca' : '#0078d7'}"/></svg>`;
  }
});

customElements.define('format-pane', class extends Base {
  css() {
    return `:host{display:flex;flex-direction:column;box-sizing:border-box;width:263px;height:850px;background:#fafafa;border-top:1px solid #cfcfcf;border-right:2px solid #d0d0d0}
    .h{display:flex;align-items:center;height:32px;border-bottom:1px solid #cfcfcf}.t{display:flex;align-items:center;height:55px;padding-bottom:1px}
    .tabs{display:flex;align-items:flex-end;height:28px;padding-left:5px;border-bottom:1px solid #999}
    .tab{display:flex;align-items:center;justify-content:center;height:25px;background:#f3f3f3;border:1px solid #e2e2e2;border-left:0;border-bottom:0;padding-top:1px}.on{height:28px;background:#fafafa;margin-bottom:-1px;border-left:1px solid #e2e2e2;width:74px;padding:1px 3px 0 0}
    .b{display:flex;height:680px}.l{width:241px}.g{width:20px;background:#f0f0f0;padding:22px 0 0 7px}.g i{display:block;width:6px;height:552px;background:#858585}
    .r{display:flex;align-items:center;height:27px}.r>p{margin:0;width:116px;display:flex;justify-content:flex-end;margin-right:4px}.r.head{padding-left:23px}
    .clear{display:grid;place-items:center;margin:10px 0 0 24px;width:221px;height:28px;border:1px solid #ccc;border-radius:4px;background:#fdfdfd}`;
  }
  html() {
    const rows = [[244, 'Default', 56], [278.5, 'Worksheet:', 81, '#f6ede2'], [315, 'Pane:', 38], [351, 'Header:', 53], [394, 'Total', 39], [428.5, 'Pane:', 38], [465, 'Header:', 53], [507, 'Grand Total', 91], [542, 'Pane:', 38], [578.5, 'Header:', 53], [621, 'Row Banding', 101], [656, 'Pane:', 38, '#f5f5f5'], [692.5, 'Header:', 53, '#f5f5f5'], [730, 'Band Size:', 72], [769.5, 'Level:', 39], [812, 'Column Banding', 128], [847.5, 'Pane:', 38], [883.5, 'Header:', 53]];
    let end = 223;
    const body = rows.map(([cy, t, w, fill]) => {
      const m = cy - 13.5 - end; end = cy + 13.5;
      if (!t.endsWith(':')) return `<div class="r head" style="margin-top:${m}px"><ui-text s="15.500" b="600" c="#111" w="${w}">${t}</ui-text></div>`;
      const ctl = t === 'Band Size:' ? '<ui-slider></ui-slider>' : t === 'Level:' ? '<ui-slider off></ui-slider>' : `<ui-select ${fill ? `fill="${fill}"` : ''}></ui-select>`;
      return `<div class="r" style="margin-top:${m}px"><p><ui-text w="${w}" c="${t === 'Level:' ? '#999' : '#111'}" b="${t === 'Worksheet:' ? 600 : 400}">${t}</ui-text></p>${ctl}</div>`;
    }).join('');
    return `<div class="h">${track([tx(23, 124, 'Format Shading', 's="16" b="600" c="#111"'), ic(249, 'x')])}</div>
    <div class="t">${track([ic(36, 'fA'), ic(66, 'fAlign'), ic(94.5, 'fBucket'), ic(123.5, 'fGrid'), ic(151.500, 'fLines'), tx(190, 40, 'Fields', 'c="#111"'), ic(239, 'triblack')])}</div>
    <div class="tabs"><div class="tab on"><ui-text w="40">Sheet</ui-text></div><div class="tab" style="width:65px;padding-right:3px"><ui-text w="37">Rows</ui-text></div><div class="tab" style="width:90px"><ui-text w="62">Columns</ui-text></div></div>
    <div class="b"><div class="l">${body}</div><div class="g"><i></i></div></div><div class="clear"><ui-text w="36" c="#222">Clear</ui-text></div>`;
  }
});

customElements.define('shelf-card', class extends Base {
  css() { return ':host{display:block;box-sizing:border-box;background:#fafafa;border:1px solid #d0d0d0;border-right-width:2px;padding:8px 0 0 8px}'; }
  html() { return `<ui-text w="42" c="#444">${this.attr('label')}</ui-text><slot></slot>`; }
});

customElements.define('mark-button', class extends Base {
  css() { return ':host{display:flex;box-sizing:border-box;flex-direction:column;align-items:center;justify-content:space-between;width:54px;height:53px;border:1px solid #d0d0d0;border-right-width:2px;border-top-width:2px;padding:7px 1px 0 0;background:#fafafa}'; }
  html() { return `<ui-icon n="${this.attr('i')}"></ui-icon><ui-text w="${this.attr('w')}" s="14.500" c="#222">${this.attr('t')}</ui-text>`; }
});

customElements.define('field-pill', class extends Base {
  css() { return `:host{display:flex;box-sizing:border-box;align-items:center;flex:none;height:25px;border-radius:13px;background:${this.attr('c')};padding-left:14px}`; }
  html() { return `<ui-text s="${this.attr('s', 15)}" b="500" c="#fff" w="${this.attr('w')}">${this.attr('t')}</ui-text>`; }
});

customElements.define('marks-card', class extends Base {
  css() {
    return `:host{display:block}.sel{display:flex;align-items:center;width:175px;height:25px;margin-top:17px;border:1px solid #c9c9c9;background:#f8f8f8;padding-left:15px}.d{margin-left:auto;width:23px;height:23px;border-left:1px solid #ddd;display:grid;place-items:center}
    .g{display:grid;grid-template-columns:54px 54px 54px;gap:7px 6.500px;margin-top:8px}.p{display:flex;align-items:center;margin-top:3.700px;height:25px}.k{width:31px;padding-left:7px}field-pill{width:139px}`;
  }
  html() {
    const p = (i, c, t, w) => `<div class="p"><div class="k"><ui-icon n="${i}"></ui-icon></div><field-pill c="${c}" t="${t}" w="${w}"></field-pill></div>`;
    return `<div class="sel"><ui-icon n="ring"></ui-icon><ui-text style="margin-left:7px" w="37">Circle</ui-text><div class="d"><ui-icon n="tri"></ui-icon></div></div>
    <div class="g"><mark-button i="color" t="Color" w="35"></mark-button><mark-button i="size" t="Size" w="27"></mark-button><mark-button i="label" t="Label" w="34"></mark-button><mark-button i="detail" t="Detail" w="37"></mark-button><mark-button i="tooltip" t="Tooltip" w="44"></mark-button></div>
    <div style="height:7.500px"></div>${p('color', '#00b180', 'SUM(Advertisi..', 111)}${p('size', '#00b180', 'SUM(Advertisi..', 111)}${p('label', '#4a96b4', 'Business types', 106)}${p('label', '#00b180', 'SUM(Advertisi..', 111)}`;
  }
});

customElements.define('drop-shelf', class extends Base {
  css() { return ':host{display:flex;box-sizing:border-box;background:#fafafa;border:1px solid #d0d0d0;border-bottom-width:2px}.l{display:flex;align-items:center;width:156px;border-right:1px solid #d0d0d0;padding-left:9px}ui-text{margin:2px 0 0 var(--g)}'; }
  html() { return `<div class="l"><ui-icon n="${this.attr('i')}"></ui-icon><ui-text w="${this.attr('w')}" style="--g:${this.attr('gap')}px">${this.attr('t')}</ui-text></div>`; }
});

customElements.define('bubble-view', class extends Base {
  css() { return ':host{display:block;box-sizing:border-box;width:1243px;height:757px;background:#f6ede2;border:1px solid #d0d0d0;border-right-width:2px}svg{display:block}text{font-family:"Noto Sans",sans-serif;text-anchor:middle}'; }
  html() {
    const a = '#bce4d9', b = '#acdad4', c = '#99d0cf', d = '#89c6cc';
    const bubbles = [[759.6, 301.8, 40.2, b], [824, 281.2, 26.8, a], [906, 315.7, 62, c], [1004.4, 370.8, 51.8, c], [818.5, 341.8, 30.2, a], [733.9, 350, 15, a], [692.8, 377.5, 34.5, a], [770.3, 377.2, 29.5, a], [828, 407, 35, a], [896.2, 409.5, 32.9, a], [602.2, 425.2, 68.2, d], [825.6, 451.3, 9.7, a], [957, 454.8, 43.8, b], [1013, 438.5, 14.8, a], [1053, 437, 25.3, a], [871.5, 485.3, 47.7, b], [1039, 525, 63.8, d], [625.6, 533.8, 42.2, b], [939.5, 532.7, 35.7, a], [827.6, 528.7, 14.4, a], [854.1, 551.8, 20.5, a], [679, 574, 25, a], [726, 594, 26.7, a], [803.5, 605.2, 52.8, c], [900, 598.8, 42.2, b], [973.1, 590, 30, a], [669.5, 613.5, 15.8, a], [951, 637, 22.3, a], [708, 677, 58.5, c], [792.8, 682.8, 25.2, a], [823.3, 664.3, 9.7, a], [865.6, 665.2, 33.2, a], [741.4, 485.2, 83, '#6ab5c4'], [977.1, 797.2, 139.7, '#2c5985']];
    const labels = [[907, 306, 71, 'Electronic'], [906.500, 325.500, 65, 'shopping'], [1004, 372.500, 55, 'General'], [603.500, 405.500, 88, 'Food service'], [603.500, 425.500, 88, 'and drinking'], [603, 446.500, 45, 'places'], [741, 465.500, 114, 'Accommodation'], [742, 485.500, 123, 'and food services'], [741.5, 506.500, 49, '18,668'], [1039, 515.500, 66, 'Nonstore'], [1040, 535.500, 61, 'retailers'], [804, 596.500, 81, 'Automobile'], [804, 616.500, 52, 'dealers'], [709, 667.500, 97, 'Motor vehicle'], [708, 687.500, 67, 'and parts'], [978.500, 787.500, 86, 'Retail Trade', '#e3e9ee'], [978, 807.500, 49, '53,021', '#e3e9ee']];
    return `<svg width="1240" height="755" viewBox="471 193 1240 755">${bubbles.map(v => `<circle cx="${v[0]}" cy="${v[1]}" r="${v[2]}" fill="${v[3]}"/>`).join('')}
    ${labels.map(v => `<text x="${v[0]}" y="${v[1] + 5}" font-size="14.500" fill="${v[4] || '#222'}" textLength="${v[2]}">${v[3]}</text>`).join('')}
    <text x="1091.500" y="232.500" font-size="25" fill="#333" xml:space="preserve" textLength="375" lengthAdjust="spacingAndGlyphs">ADVERTISMENT COST  (TEAM 1)</text></svg>`;
  }
});

customElements.define('sheet-tabs', class extends Base {
  css() { return ':host{display:flex;box-sizing:border-box;height:37px;background:#e6e6e6;border-bottom:1px solid #cfcfcf}.t{display:flex;align-items:center;border-right:1px solid #c6c6c6;padding-top:1px}.on{background:#fafafa;padding-top:0}'; }
  html() {
    return `<div class="t" style="width:164px;padding-left:12px"><ui-icon n="cyl"></ui-icon><ui-text style="margin-left:6px" w="85" c="#666">Data Source</ui-text></div>
    <div class="t" style="width:69px;padding-left:7px"><ui-text w="51" c="#666">Sheet 1</ui-text></div><div class="t on" style="width:72px;padding-left:7px"><ui-text w="55" b="600" c="#555">Sheet 2</ui-text></div>
    <div class="t" style="width:39px;padding-left:10px"><ui-icon n="nsheet"></ui-icon></div><div class="t" style="width:40px;padding-left:11px"><ui-icon n="ndash"></ui-icon></div><div class="t" style="width:40px;padding-left:11px"><ui-icon n="nstory"></ui-icon></div>`;
  }
});

customElements.define('status-bar', class extends Base {
  css() { return ':host{display:flex;align-items:center;height:26px;background:#ebebeb}.s{height:26px;background:#ccc}ui-text{margin-top:1px}'; }
  html() {
    const s = (x, w = 1) => [x, w, '<div class="s"></div>'];
    const o = 's="14" c="#222"';
    return track([tx(4, 59, '34 marks', o), tx(84.5, 111, '1 row by 1 column', o), tx(217, 337, 'SUM(Advertising And Promotional Services): 192,792', o), s(1461, 2), s(1620), s(1654), s(1688), s(1746, 2), ic(1761, 'nfirst'), ic(1780, 'nprev'), ic(1801, 'nnext'), ic(1820, 'nlast'), s(1835), ic(1854, 'vgrid'), ic(1880, 'vfilm'), ic(1906, 'vtab')]);
  }
});

customElements.define('task-bar', class extends Base {
  css() {
    return `:host{display:flex;box-sizing:border-box;align-items:center;height:60px;border-top:1px solid #a9b6b8;background:linear-gradient(90deg,#cfe7ea 0,#c8ecee 180px,#c9ebec 520px,#dbe6e7 760px,#e1e5e4 930px,#dbe5e6 1110px,#c9e9eb 1440px,#cfe7ea 1560px,#c8ebed 1920px)}
    .q{display:flex;align-items:center;height:40px;border-radius:20px;background:#f3f9fa;border:1px solid #c2d2d4;border-bottom-color:#a7b6b8;padding-left:13px;gap:12px}
    .a{position:relative;margin-top:-1px}.a i{position:absolute;left:50%;transform:translateX(-50%);bottom:var(--b);height:4px;border-radius:2px;background:#808080;width:8px}
    .v{display:grid;place-items:center;height:48px;border-radius:5px;background:#e5f5f6}.two{display:flex;flex-direction:column;gap:2px;margin-top:-2px}.two.r{align-items:flex-end}.n{display:grid;place-items:center;height:20px;border-radius:10px;background:#1f6b75}`;
  }
  html() {
    const app = (c, n, col, w = 8) => {
      const [iw, ih] = ICONS[n];
      return [c - iw / 2, iw, `<div class="a"><ui-icon n="${n}"></ui-icon>${col ? `<i style="--b:${-(24 - ih / 2)}px;width:${w}px;background:${col}"></i>` : ''}</div>`];
    };
    const sg = 'f="segoe" s="14.500" c="#1c1c1c"';
    return track([[20, 44, '<ui-icon n="weather"></ui-icon>'], [64.5, 94, `<div class="two"><ui-text ${sg} w="31">33°C</ui-text><ui-text f="segoe" s="14.500" c="#4d5a5c" w="94">Mostly cloudy</ui-text></div>`],
      app(544.5, 'win'), [577, 273, '<div class="q"><ui-icon n="search"></ui-icon><ui-text f="segoe" s="17" c="#555" w="51">Search</ui-text></div>'],
      app(880.500, 'taskview'), app(935.500, 'teams'), app(991, 'edge'), app(1046, 'explorer', '#808686'), app(1101, 'mail'), app(1156, 'dell'), app(1211, 'wps'), app(1266, 'acrobat', '#808686'), app(1320.5, 'tabtask', '#808686'), app(1377, 'mpc', '#a35c00', 29),
      [1584, 38, '<div class="v"><ui-icon n="tchev"></ui-icon></div>'], [1636, 30, `<div class="two"><ui-text ${sg} w="29">ENG</ui-text><ui-text ${sg} w="30">INTL</ui-text></div>`],
      ic(1698, 'globe'), ic(1728.5, 'speaker'), ic(1758, 'battery'), [1788, 78, `<div class="two r"><ui-text ${sg} w="36">14:24</ui-text><ui-text ${sg} w="78">29-09-2023</ui-text></div>`],
      [1875, 20, '<div class="n"><ui-text f="segoe" s="12" b="600" c="#fff">8</ui-text></div>']]);
  }
});

/* Floating palette: the tab overlays the toolbar, the body hangs below it. */
customElements.define('show-me', class extends Base {
  css() {
    return `:host{position:absolute;left:1660px;top:62px;width:256px;filter:drop-shadow(3px 2px 2px rgba(0,0,0,.38))}
    .tab{margin-left:117px;width:139px;height:46px;background:#fafafa;border:1px solid #ddd;border-left:1px solid #777;border-bottom:0;display:flex;align-items:center;padding:0 0 7px 12px;gap:6px}
    .body{height:694px;margin-top:-1px;background:#fafafa;border:2px solid #dedede;border-bottom:1px solid #555;border-right:1px solid #ccc;border-top:0;padding:17px 0 0 16px}
    .cap{height:2px;width:118px;background:#dedede;margin-top:-1px}
    .g{display:grid;grid-template-columns:repeat(3,70px);grid-auto-rows:52px;gap:5.500px 5px}.g svg{display:block;background:#fff;border:1px solid #e0e0e0;width:70px;height:52px}.g svg.on{border:2px solid #de6b34;border-radius:2px}
    .r{display:flex;align-items:center;height:25px;margin-left:2px;gap:4px}`;
  }
  html() {
    return `<div class="tab"><ui-icon n="showme"></ui-icon><ui-text s="17" c="#111" w="68">Show Me</ui-text></div><div class="cap"></div>
    <div class="body"><div class="g">${THUMBS.map((t, i) => `<svg viewBox="${i === 6 ? '2 2 66 48' : '1 1 68 50'}" class="${i === 6 ? 'on' : ''}">${t}</svg>`).join('')}</div>
    <div class="r" style="margin-top:21px"><ui-text w="23" c="#222">For</ui-text><ui-text b="600" c="#111" w="108">horizontal bars</ui-text><ui-text w="20" c="#222">try</ui-text></div>
    <div class="r" style="margin-top:6px"><ui-text s="14.500" w="67" c="#222">0 or more</ui-text><field-pill style="width:113px" c="#4a96b4" t="Dimensions" w="84" s="14.500"></field-pill></div>
    <div class="r" style="margin-top:9.500px"><ui-text s="14.500" w="64" c="#222">1 or more</ui-text><field-pill style="width:99px" c="#00b180" t="Measures" w="69" s="14.500"></field-pill></div></div>`;
  }
});

customElements.define('tray-flyout', class extends Base {
  css() {
    return `:host{position:absolute;left:1473px;top:843px;width:261px;height:161px;box-sizing:border-box;border-radius:9px;background:linear-gradient(#fbf6f0,#fbf9f3 50%,#f7f7f7);box-shadow:0 0 0 1px #e2ddd6,0 8px 16px rgba(0,0,0,.2);padding:5px 5px}
    .g{display:grid;grid-template-columns:repeat(5,50px);grid-auto-rows:50px}.c{display:grid;place-items:center}.c.on{background:#fdfcfa;box-shadow:0 0 0 1px #eee9e2;border-radius:5px;width:48px;height:48px;margin:1px}`;
  }
  html() {
    return `<div class="g">${['lavb', 'lavr', 'lavw', 'cc', 'feather', 'update', 'cloudoff', 'vlc', 'phone', 'onenote', 'defender'].map((n, i) => `<div class="c ${i === 4 ? 'on' : ''}"><ui-icon n="${n}"></ui-icon></div>`).join('')}</div>`;
  }
});

customElements.define('tableau-desktop', class extends Base {
  css() {
    return `:host{position:relative;display:flex;flex-direction:column;width:1920px;height:1080px;background:#f4f4f4;overflow:hidden}
    .work{display:flex;height:850px}.cards{display:flex;flex-direction:column;gap:8px;width:193px;margin-left:7px}.view{display:flex;flex-direction:column;gap:8px;margin-left:7px;width:1243px}`;
  }
  html() {
    return `<title-bar></title-bar><menu-bar></menu-bar><tool-bar></tool-bar>
    <div class="work"><format-pane></format-pane>
    <div class="cards"><shelf-card label="Pages" style="height:77px"></shelf-card><shelf-card label="Filters" style="height:97px"></shelf-card><shelf-card label="Marks" style="height:358px"><marks-card></marks-card></shelf-card></div>
    <div class="view"><drop-shelf i="cols" t="Columns" w="61" gap="9" style="height:35px"></drop-shelf><drop-shelf i="rows" t="Rows" w="37" gap="7" style="height:34px"></drop-shelf><bubble-view></bubble-view></div></div>
    <sheet-tabs></sheet-tabs><status-bar></status-bar><task-bar></task-bar><show-me></show-me><tray-flyout></tray-flyout>`;
  }
});
</script>
</body>
</html>
